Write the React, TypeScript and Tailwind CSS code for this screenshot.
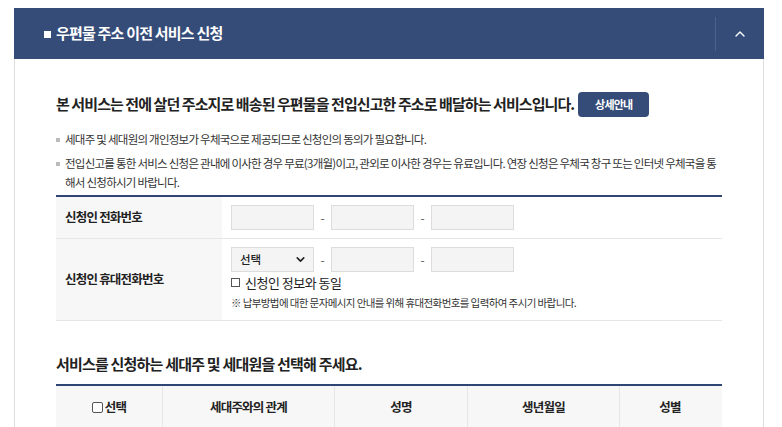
import { ChevronUp, ChevronDown } from "lucide-react";

/* 우편물 주소 이전 서비스 신청 — form panel */

const font = { fontFamily: '"Noto Sans CJK KR", "Noto Sans", sans-serif' };

function PhoneInput() {
  return <div className="w-[83px] h-[25px] bg-[#f4f4f4] border border-[#dcdcdc]" />;
}

function Dash() {
  return <span className="w-[17px] text-center text-[12px] text-[#555]">-</span>;
}

export default function App() {
  return (
    <div className="min-h-screen bg-white pt-2" style={font}>
      <div className="ml-[14px] w-[750px]">
        {/* Header */}
        <div className="h-[51px] bg-[#354c79] flex items-center">
          <div className="flex-1 flex items-center pl-[30px] gap-[5px]">
            <span className="w-[7px] h-[7px] bg-white mt-[2px]" />
            <h1 className="text-white text-[15px] font-bold tracking-[-0.8px]">우편물 주소 이전 서비스 신청</h1>
          </div>
          <div className="w-[49px] h-[34px] border-l border-[#4b6190] flex items-center justify-center">
            <ChevronUp size={16} strokeWidth={2} className="text-white" />
          </div>
        </div>

        {/* Body */}
        <div className="border-l border-r border-[#dddddd] px-[41px] pt-[33px] pb-[10px]">
          <div className="flex items-center gap-[4px]">
            <h2 className="text-[15px] font-bold text-[#222] tracking-[-0.92px]">
              본 서비스는 전에 살던 주소지로 배송된 우편물을 전입신고한 주소로 배달하는 서비스입니다.
            </h2>
            <button className="w-[71px] h-[25px] rounded-[4px] bg-[#354c79] text-white text-[11px] font-bold tracking-[-0.8px]">
              상세안내
            </button>
          </div>

          <ul className="mt-[13px] text-[11.5px] text-[#333] tracking-[-0.75px] leading-[19px]">
            <li className="flex gap-[5px]">
              <span className="w-[4px] h-[4px] bg-[#bbb] mt-[8px] shrink-0" />
              <span>세대주 및 세대원의 개인정보가 우체국으로 제공되므로 신청인의 동의가 필요합니다.</span>
            </li>
            <li className="flex gap-[5px] mt-[5px]">
              <span className="w-[4px] h-[4px] bg-[#bbb] mt-[8px] shrink-0" />
              <span>
                전입신고를 통한 서비스 신청은 관내에 이사한 경우 무료(3개월)이고, 관외로 이사한 경우는 유료입니다. 연장 신청은 우체국 창구 또는 인터넷 우체국을 통해서 신청하시기 바랍니다.
              </span>
            </li>
          </ul>

          {/* Applicant table */}
          <div className="mt-[3px] border-t-2 border-[#2f4574]">
            <div className="flex border-b border-[#e6e6e6]">
              <div className="w-[166px] bg-[#f7f7f7] pl-[9px] flex items-center text-[12.5px] font-bold text-[#222] tracking-[-0.8px]">
                신청인 전화번호
              </div>
              <div className="flex-1 flex items-center pl-[9px] h-[41px]">
                <PhoneInput />
                <Dash />
                <PhoneInput />
                <Dash />
                <PhoneInput />
              </div>
            </div>
            <div className="flex border-b border-[#e6e6e6]">
              <div className="w-[166px] bg-[#f7f7f7] pl-[9px] flex items-center text-[12.5px] font-bold text-[#222] tracking-[-0.8px]">
                신청인 휴대전화번호
              </div>
              <div className="flex-1 pl-[9px] pt-[8px] pb-[10px]">
                <div className="flex items-center">
                  <div className="w-[83px] h-[25px] bg-[#f4f4f4] border border-[#dcdcdc] flex items-center justify-between pl-[8px] pr-[6px]">
                    <span className="text-[11.5px] font-medium text-[#222]">선택</span>
                    <ChevronDown size={13} strokeWidth={3} className="text-[#222]" />
                  </div>
                  <Dash />
                  <PhoneInput />
                  <Dash />
                  <PhoneInput />
                </div>
                <label className="flex items-center gap-[5px] mt-[1px] text-[13px] text-[#222] tracking-[-0.5px]">
                  <span className="w-[9px] h-[9px] border border-[#555] bg-white" />
                  신청인 정보와 동일
                </label>
                <p className="mt-[2px] text-[10.5px] text-[#333] tracking-[-0.6px]">
                  ※ 납부방법에 대한 문자메시지 안내를 위해 휴대전화번호를 입력하여 주시기 바랍니다.
                </p>
              </div>
            </div>
          </div>

          <h3 className="mt-[32px] text-[15px] font-bold text-[#222] tracking-[-0.8px]">
            서비스를 신청하는 세대주 및 세대원을 선택해 주세요.
          </h3>

          {/* Household table */}
          <div className="mt-[8px] border-t-2 border-[#2f4574] grid grid-cols-[107px_172px_133px_152px_100px] bg-[#f7f7f7] text-[12.5px] font-bold text-[#222] tracking-[-0.8px]">
            <div className="h-[44px] flex items-center justify-center gap-[2px] border-r border-[#e6e6e6]">
              <span className="w-[11px] h-[11px] border border-[#555] rounded-[2px] bg-white" />
              선택
            </div>
            <div className="h-[44px] flex items-center justify-center border-r border-[#e6e6e6]">세대주와의 관계</div>
            <div className="h-[44px] flex items-center justify-center border-r border-[#e6e6e6]">성명</div>
            <div className="h-[44px] flex items-center justify-center border-r border-[#e6e6e6]">생년월일</div>
            <div className="h-[44px] flex items-center justify-center">성별</div>
          </div>
        </div>
      </div>
    </div>
  );
}
